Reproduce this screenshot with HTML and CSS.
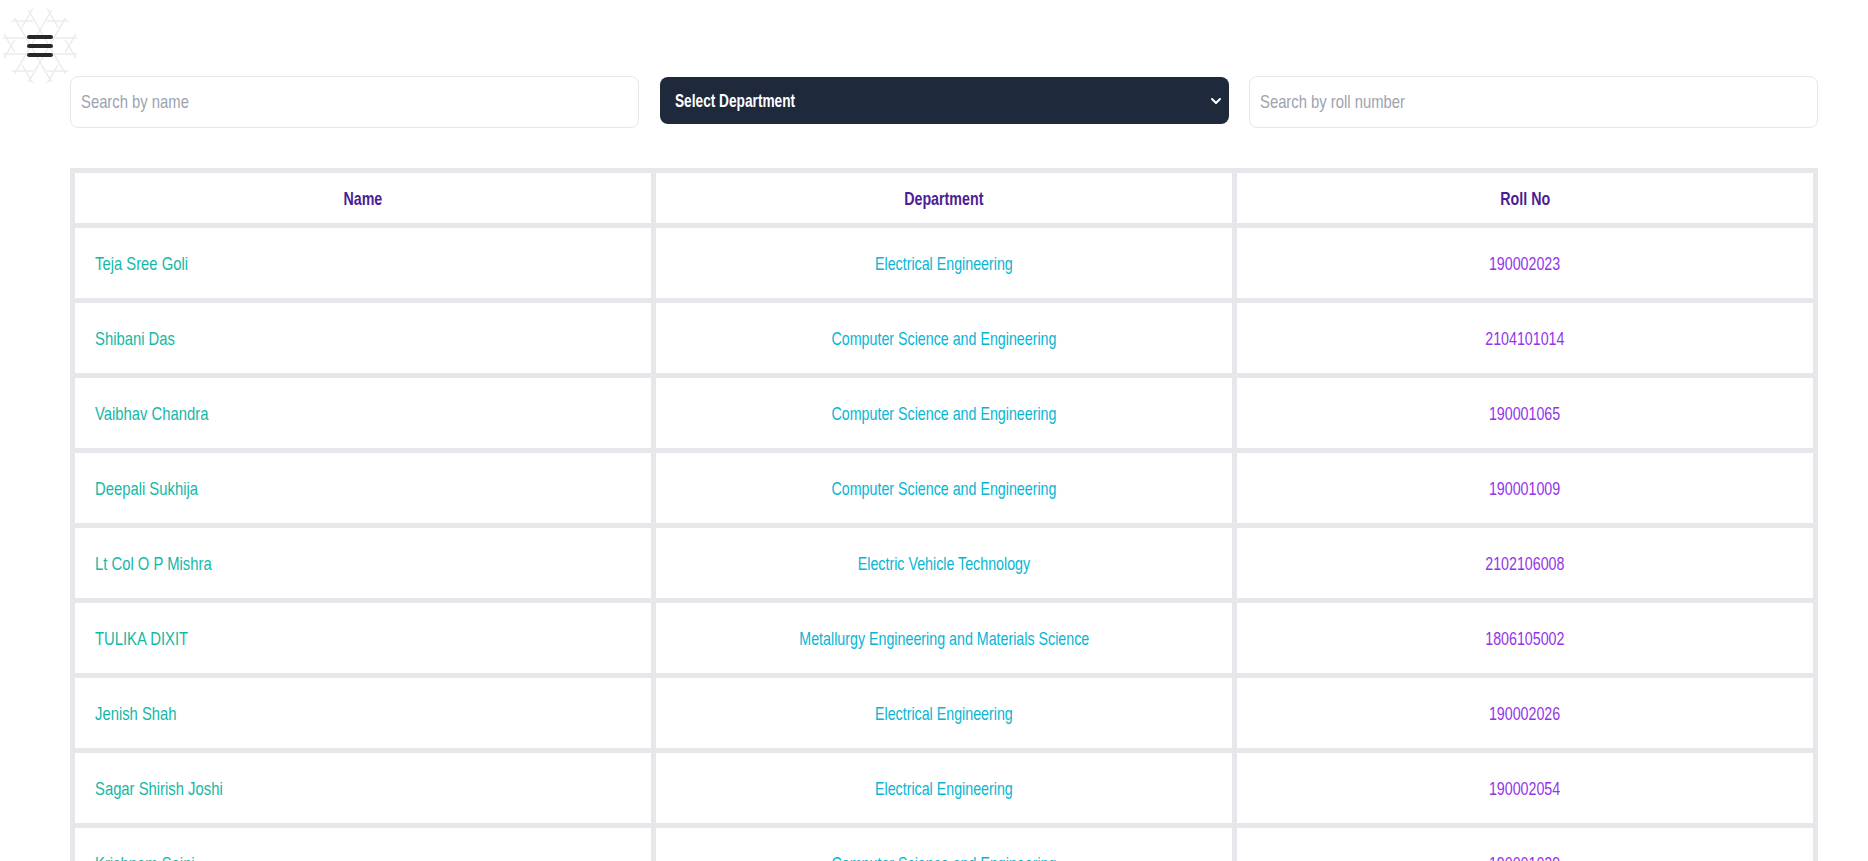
FILE: index.html
```html
<!DOCTYPE html>
<html lang="en">
<head>
    <meta charset="UTF-8">
    <meta name="viewport" content="width=device-width, initial-scale=1.0">
    <title>Student Directory</title>
    <link rel="stylesheet" href="styles.css">
</head>
<body>

    <div class="page">
        <div class="logo">
            <svg viewBox="-40 -40 80 80" width="80" height="80" fill="none" stroke="#ececee" stroke-width="1.5">
                <defs>
                    <clipPath id="logoClip"><circle cx="0" cy="0" r="38"/></clipPath>
                    <g id="logoLines">
                        <path d="M-38 -25H-7M7 -25H38M-38 -8H38M-38 8H38M-38 25H-7M7 25H38"/>
                    </g>
                </defs>
                <g clip-path="url(#logoClip)">
                    <use href="#logoLines"/>
                    <use href="#logoLines" transform="rotate(60)"/>
                    <use href="#logoLines" transform="rotate(120)"/>
                </g>
            </svg>
        </div>
        <button class="menu-btn" aria-label="Menu">
            <span></span><span></span><span></span>
        </button>

        <div class="container">
            <div class="filters">
                <div class="search-box">
                    <input type="text" class="search" placeholder="Search by name">
                </div>
                <button class="dept-select">
                    <span class="txt txt-left">Select Department</span>
                    <svg class="chevron" viewBox="0 0 12 12" width="12" height="12" fill="none" stroke="#fff" stroke-width="2" stroke-linecap="round" stroke-linejoin="round">
                        <path d="M2 4l4 4 4-4"/>
                    </svg>
                </button>
                <div class="search-box">
                    <input type="text" class="search" placeholder="Search by roll number">
                </div>
            </div>

            <table class="students">
                <thead>
                    <tr>
                        <th><span class="txt">Name</span></th>
                        <th><span class="txt">Department</span></th>
                        <th><span class="txt">Roll No</span></th>
                    </tr>
                </thead>
                <tbody>
                    <tr><td class="name"><span class="txt txt-left">Teja Sree Goli</span></td><td class="dept"><span class="txt">Electrical Engineering</span></td><td class="roll"><span class="txt">190002023</span></td></tr>
                    <tr><td class="name"><span class="txt txt-left">Shibani Das</span></td><td class="dept"><span class="txt">Computer Science and Engineering</span></td><td class="roll"><span class="txt">2104101014</span></td></tr>
                    <tr><td class="name"><span class="txt txt-left">Vaibhav Chandra</span></td><td class="dept"><span class="txt">Computer Science and Engineering</span></td><td class="roll"><span class="txt">190001065</span></td></tr>
                    <tr><td class="name"><span class="txt txt-left">Deepali Sukhija</span></td><td class="dept"><span class="txt">Computer Science and Engineering</span></td><td class="roll"><span class="txt">190001009</span></td></tr>
                    <tr><td class="name"><span class="txt txt-left">Lt Col O P Mishra</span></td><td class="dept"><span class="txt">Electric Vehicle Technology</span></td><td class="roll"><span class="txt">2102106008</span></td></tr>
                    <tr><td class="name"><span class="txt txt-left">TULIKA DIXIT</span></td><td class="dept"><span class="txt">Metallurgy Engineering and Materials Science</span></td><td class="roll"><span class="txt">1806105002</span></td></tr>
                    <tr><td class="name"><span class="txt txt-left">Jenish Shah</span></td><td class="dept"><span class="txt">Electrical Engineering</span></td><td class="roll"><span class="txt">190002026</span></td></tr>
                    <tr><td class="name"><span class="txt txt-left">Sagar Shirish Joshi</span></td><td class="dept"><span class="txt">Electrical Engineering</span></td><td class="roll"><span class="txt">190002054</span></td></tr>
                    <tr><td class="name"><span class="txt txt-left">Krishnam Saini</span></td><td class="dept"><span class="txt">Computer Science and Engineering</span></td><td class="roll"><span class="txt">190001029</span></td></tr>
                </tbody>
            </table>
        </div>
    </div>

</body>
</html>
```

FILE: styles.css
```css
html, body {
    margin: 0;
    padding: 0;
    background: #fff;
}
* {
    box-sizing: border-box;
}
.page {
    position: relative;
    height: 100vh;
    overflow: hidden;
    font-family: "Liberation Sans", sans-serif;
    font-size: 19px;
}
/* no handwritten font here, so squeeze the text to the same width */
.txt {
    display: inline-block;
    white-space: nowrap;
    transform: scaleX(0.75);
}
.txt-left {
    transform-origin: left center;
}
.logo {
    position: absolute;
    left: 0;
    top: 6px;
}
.logo svg {
    display: block;
}
.menu-btn {
    position: absolute;
    left: 27px;
    top: 35px;
    width: 26px;
    height: 22px;
    padding: 0;
    border: none;
    background: none;
    display: flex;
    flex-direction: column;
    justify-content: space-between;
}
.menu-btn span {
    display: block;
    height: 4px;
    border-radius: 2px;
    background: #27272a;
}
.container {
    padding: 76px 50px 0 70px;
}
.filters {
    display: grid;
    grid-template-columns: repeat(3, 1fr);
    gap: 20px;
    align-items: start;
    margin-bottom: 40px;
}
.search-box {
    height: 52px;
    padding-left: 10px;
    border: 1px solid #e5e7eb;
    border-radius: 8px;
    overflow: hidden;
    background: #fff;
}
.search {
    display: block;
    width: 130%;
    height: 100%;
    padding: 0;
    border: none;
    outline: none;
    background: none;
    font: inherit;
    transform: scaleX(0.78);
    transform-origin: left center;
}
.search::placeholder {
    color: #9ca3af;
}
.dept-select {
    display: flex;
    align-items: center;
    justify-content: space-between;
    width: calc(100% - 1px);
    height: 47px;
    margin: 1px 0 0 1px;
    padding: 0 7px 0 15px;
    border: none;
    border-radius: 8px;
    background: #1e293b;
    color: #fff;
    font: inherit;
    font-weight: bold;
}
.dept-select .txt {
    transform: scaleX(0.72);
}
.students {
    width: 100%;
    table-layout: fixed;
    border-collapse: collapse;
    border: 5px solid #e5e7eb;
}
.students th, .students td {
    border: 5px solid #e5e7eb;
    text-align: center;
}
.students th {
    height: 55px;
    padding: 2px 0 0;
    color: #4c1d95;
    font-weight: bold;
}
.students td {
    height: 75px;
    padding: 2px 20px 0;
}
.students td.name {
    text-align: left;
    color: #14b8a6;
}
.students td.name .txt {
    transform: scaleX(0.78);
}
.dept {
    color: #06b6d4;
}
.roll {
    color: #9333ea;
}
```
